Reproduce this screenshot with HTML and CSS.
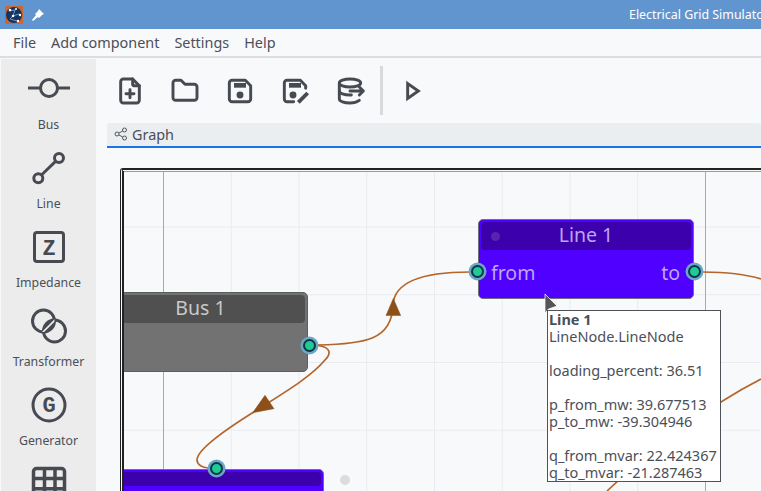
FILE: index.html
```html
<!DOCTYPE html>
<html lang="en">
<head>
<meta charset="utf-8">
<title>Electrical Grid Simulator</title>
<link rel="stylesheet" href="styles.css">
</head>
<body>
<div class="app">
  <header class="titlebar">
    <svg class="logo" viewBox="0 0 18 18">
      <rect width="18" height="18" rx="1" fill="#d0662f"/>
      <circle cx="9" cy="9" r="8" fill="#14345f"/>
      <path d="M4 5L10 4L8 10L14 8M8 10L5 13L12 15" stroke="#6f93c4" stroke-width="1" fill="none"/>
      <circle cx="5" cy="4" r="1.3" fill="#fff"/><circle cx="11" cy="3" r="1" fill="#fff"/>
      <circle cx="8" cy="10" r="1.3" fill="#fff"/><circle cx="15" cy="9" r="1.2" fill="#fff"/>
      <circle cx="13" cy="15" r="1.2" fill="#fff"/>
    </svg>
    <svg class="pin-icon" viewBox="0 0 14 14"><path d="M8 1L13 6L11 7L8 10L7 9L2 13L1 12L5 7L4 6L7 3Z" fill="#fff"/></svg>
    <span class="title">Electrical Grid Simulator</span>
  </header>
  <nav class="menubar">
    <span>File</span><span>Add component</span><span>Settings</span><span>Help</span>
  </nav>
  <div class="main">
    <aside class="sidebar">
      <div class="tool">
        <svg class="tool-icon" viewBox="0 0 44 44"><circle cx="22" cy="22" r="8.5"/><path d="M1 22H13.5M30.5 22H43"/></svg>
        <span>Bus</span>
      </div>
      <div class="tool">
        <svg class="tool-icon" viewBox="0 0 44 44"><circle cx="32" cy="13" r="4.5"/><circle cx="11.3" cy="33.3" r="4.5"/><path d="M14.5 30L28.8 16.2"/></svg>
        <span>Line</span>
      </div>
      <div class="tool">
        <svg class="tool-icon" viewBox="0 0 44 44"><rect x="7.5" y="8.5" width="29" height="29" rx="2.5"/><text class="glyph" x="22" y="31">Z</text></svg>
        <span>Impedance</span>
      </div>
      <div class="tool">
        <svg class="tool-icon" viewBox="0 0 44 44">
          <defs><clipPath id="lens"><circle cx="16.5" cy="18" r="11"/></clipPath></defs>
          <circle cx="16.5" cy="18" r="11"/><circle cx="27.5" cy="28" r="11"/>
          <g clip-path="url(#lens)"><circle class="lens-fill" cx="27.5" cy="28" r="11"/><path class="lens-stripe" d="M15 30L29 16"/></g>
        </svg>
        <span>Transformer</span>
      </div>
      <div class="tool">
        <svg class="tool-icon" viewBox="0 0 44 44"><circle cx="22" cy="23" r="16"/><text class="glyph" x="22" y="30">G</text></svg>
        <span>Generator</span>
      </div>
      <div class="tool">
        <svg class="tool-icon tool-icon-bold" viewBox="0 0 44 44"><rect x="6.5" y="7.5" width="31" height="31" rx="3"/><path d="M6.5 17.5H37.5M6.5 27.7H37.5M17.5 7.5V38.5M28 7.5V38.5"/></svg>
      </div>
    </aside>
    <section class="workspace">
      <div class="toolbar">
        <svg class="btn" viewBox="0 0 24 24"><path d="M14 3v4a1 1 0 0 0 1 1h4"/><path d="M17 21h-10a2 2 0 0 1 -2 -2v-14a2 2 0 0 1 2 -2h7l5 5v11a2 2 0 0 1 -2 2z"/><path d="M12 11v6"/><path d="M9 14h6"/></svg>
        <svg class="btn" viewBox="0 0 24 24"><path d="M5 4h4l3 3h7a2 2 0 0 1 2 2v8a2 2 0 0 1 -2 2h-14a2 2 0 0 1 -2 -2v-11a2 2 0 0 1 2 -2"/></svg>
        <svg class="btn" viewBox="0 0 24 24"><path d="M6 4h10l4 4v10a2 2 0 0 1 -2 2h-12a2 2 0 0 1 -2 -2v-12a2 2 0 0 1 2 -2"/><rect class="solid" x="7.5" y="6" width="9" height="3.5"/><circle class="solid" cx="12" cy="15" r="2.6"/></svg>
        <svg class="btn" viewBox="0 0 24 24"><path d="M11 20H6a2 2 0 0 1 -2 -2v-12a2 2 0 0 1 2 -2h10l4 4v2"/><rect class="solid" x="7.5" y="6" width="9" height="3.5"/><circle class="solid" cx="10.5" cy="15" r="2.6"/><path class="pen" d="M14.5 20.5L21.5 13.5"/></svg>
        <svg class="btn" viewBox="0 0 24 24"><path d="M4 6c0 1.657 3.582 3 8 3s8 -1.343 8 -3s-3.582 -3 -8 -3s-8 1.343 -8 3"/><path d="M4 6v6c0 1.657 3.582 3 8 3h1"/><path d="M4 12v6c0 1.657 3.582 3 8 3c2 0 5 -.5 7 -2"/><path d="M12 12h10M19 9l3 3l-3 3"/></svg>
        <div class="separator"></div>
        <svg class="btn" viewBox="0 0 24 24"><path class="miter" d="M8 6.4V17.6L16 12Z"/></svg>
      </div>
      <div class="tab">
        <svg class="tab-icon" viewBox="0 0 14 14"><circle cx="3" cy="7" r="2"/><circle cx="10.5" cy="3" r="2"/><circle cx="10.5" cy="11" r="2"/><path d="M5 6L8.7 4M5 8L8.7 10"/></svg>
        <span>Graph</span>
      </div>
      <div class="frame">
        <div class="stage">
          <svg class="edges" viewBox="124 171 637 320">
            <path d="M318 345C365 344 392 340 393 305C394 285 415 272 470 272"/>
            <path d="M318 345.5C330 347 332 353 325 360C310 378 280 395 253 412.5C225 430 197 450 197 460C197 465 203 467.5 208 468"/>
            <path d="M703 272C725 272 745 274 761 279"/>
            <path d="M761 379C710 405 650 450 607 491"/>
            <polygon points="393.3,298.5 400.7,315.5 386,315.5"/>
            <polygon points="265,395.3 274,408.7 252.7,412.7"/>
          </svg>
          <div class="node node-bus">
            <div class="node-head">Bus 1</div>
            <span class="port port-bus-out"></span>
          </div>
          <div class="node node-line1">
            <div class="node-head"><i class="node-dot"></i>Line 1</div>
            <div class="node-ports"><span>from</span><span>to</span></div>
            <span class="port port-from"></span>
            <span class="port port-to"></span>
          </div>
          <div class="node node-line2">
            <div class="node-head"></div>
            <span class="port port-top"></span>
          </div>
          <span class="float-dot"></span>
          <svg class="cursor" viewBox="0 0 14 22"><path d="M1 1V20L4.5 16L13 13Z"/></svg>
          <div class="tooltip"><b>Line 1</b><br>LineNode.LineNode<br><br>loading_percent: 36.51<br><br>p_from_mw: 39.677513<br>p_to_mw: -39.304946<br><br>q_from_mvar: 22.424367<br>q_to_mvar: -21.287463</div>
        </div>
      </div>
    </section>
  </div>
</div>
</body>
</html>
```
FILE: styles.css
```css
* { box-sizing: border-box; }
html, body { margin: 0; height: 100%; overflow: hidden; }
body { font-family: "Noto Sans", "Open Sans", sans-serif; color: #4b4f58; background: #f8f9fb; }
.app { width: 761px; height: 491px; display: flex; flex-direction: column; overflow: hidden; }

.titlebar { height: 29px; flex: none; background: #6195cf; display: flex; align-items: center; padding-left: 5px; }
.logo { width: 18px; height: 18px; flex: none; }
.pin-icon { width: 14px; height: 14px; flex: none; margin-left: 8px; }
.title { margin-left: 584px; color: #fff; font-size: 12.4px; white-space: nowrap; }

.menubar { height: 29px; flex: none; display: flex; gap: 15px; align-items: center; padding: 0 0 1px 13px; border-bottom: 2px solid #dcdde0; font-size: 14.4px; }

.main { flex: 1; display: flex; min-height: 0; }
.sidebar { width: 95px; margin: 1px 0 0 1px; flex: none; background: #ececec; padding-top: 7px; display: flex; flex-direction: column; gap: 11px; overflow: hidden; }
.tool { display: flex; flex-direction: column; align-items: center; gap: 5px; font-size: 12.3px; line-height: 19px; height: 68px; flex: none; }
.tool-icon { width: 44px; height: 44px; flex: none; fill: none; stroke: #484a52; stroke-width: 3; }
.tool-icon-bold { stroke-width: 3.5; }
.lens-fill { fill: #484a52; stroke: none; }
.lens-stripe { stroke: #ececec; stroke-width: 1.6; }
.glyph { font-family: "Liberation Mono", monospace; font-weight: 700; font-size: 22px; text-anchor: middle; fill: #484a52; stroke: none; }

.workspace { flex: 1; min-width: 0; padding-left: 11px; display: flex; flex-direction: column; }
.toolbar { height: 65px; flex: none; display: flex; align-items: center; gap: 23px; padding: 0 0 0 7px; }
.btn { width: 32px; height: 32px; flex: none; fill: none; stroke: #484a52; stroke-width: 2.2; stroke-linecap: round; stroke-linejoin: round; }
.btn .solid { fill: #484a52; stroke: none; }
.btn .miter { stroke-linejoin: miter; stroke-width: 2.2; }
.btn .pen { stroke-width: 2.9; stroke-linecap: butt; }
.separator { width: 3px; height: 49px; background: #d8d9dc; margin: 0 0 0 -9px; }
.toolbar .separator + .btn { margin-left: -9px; }

.tab { height: 25px; flex: none; display: flex; align-items: center; gap: 4px; padding: 0 0 1px 7px; background: #ebeef1; border-bottom: 2px solid #1a73e8; border-radius: 3px 3px 0 0; font-size: 14.4px; }
.tab-icon { width: 14px; height: 14px; fill: none; stroke: #555; stroke-width: 1; }

.frame { margin: 20px 0 0 13px; width: 700px; height: 400px; flex: none; border-style: solid double; border-color: #222; border-width: 2px 0 0 3px; border-top-left-radius: 3px; padding: 1px 0 0 1px; }
.stage { position: relative; width: 100%; height: 100%; overflow: hidden; background-color: #f8f9fb;
  box-shadow: inset 0 1px 0 #9a9a9a, -1px 0 0 #222;
  background-image:
    linear-gradient(90deg, #a9a9a9 1px, transparent 1px),
    linear-gradient(90deg, #e9ebee 1px, transparent 1px),
    linear-gradient(#e9ebee 1px, transparent 1px);
  background-size: 542px 100%, 67.75px 100%, 100% 67.75px;
  background-position: 39px 0, 39px 0, 0 55.5px; }

.edges { position: absolute; left: 0; top: 0; width: 637px; height: 320px; fill: none; stroke: #b5652a; stroke-width: 1.7; }
.edges polygon { fill: #8c5018; stroke: #8c5018; stroke-width: .5; }

.node { position: absolute; width: 216px; height: 80px; border: 1px solid #6f6f7a; border-radius: 5px; padding: 2px; color: #bba6f2; font-size: 19.5px; }
.node-bus { left: -31px; top: 121px; width: 215px; background: #727272; border-color: #5c5f5f; color: #c9c9c9; }
.node-line1 { left: 354px; top: 48px; background: #4f00ff; }
.node-line2 { left: -10px; top: 298px; background: #4f00ff; width: 209.5px; }
.node-head { height: 28px; padding-bottom: 2px; border-radius: 4px; background: #3d00ad; display: flex; align-items: center; justify-content: center; position: relative; line-height: 26px; }
.node-bus .node-head { background: #505050; }
.node-line2 .node-head { height: 14px; padding: 0; }
.node-dot { position: absolute; left: 10px; top: 10px; width: 9px; height: 9px; border-radius: 50%; background: #5526ad; }
.node-ports { display: flex; justify-content: space-between; padding: 10px 11px 0 10px; line-height: 26px; }
.port { position: absolute; width: 13px; height: 13px; border-radius: 50%; background: #1ecb96; border: 2.5px solid #0f3547; box-shadow: 0 0 0 2.5px #6ba8c4; }
.port-from { left: -8.2px; top: 45.2px; }
.port-to { left: 209.2px; top: 45.2px; }
.port-bus-out { left: 208.5px; top: 45.5px; }
.port-top { left: 94.8px; top: -8.5px; }
.float-dot { position: absolute; left: 216px; top: 304px; width: 10px; height: 10px; border-radius: 50%; background: #dcdcdc; }

.cursor { position: absolute; left: 420px; top: 122px; width: 14px; height: 22px; fill: #555; stroke: #fff; stroke-width: .7; }
.tooltip { position: absolute; left: 423px; top: 139px; width: 174px; height: 172px; background: #fff; border: 1px solid #50525a; padding: 0 0 0 1px; font-size: 14.5px; line-height: 17px; white-space: nowrap; overflow: hidden; }
```
